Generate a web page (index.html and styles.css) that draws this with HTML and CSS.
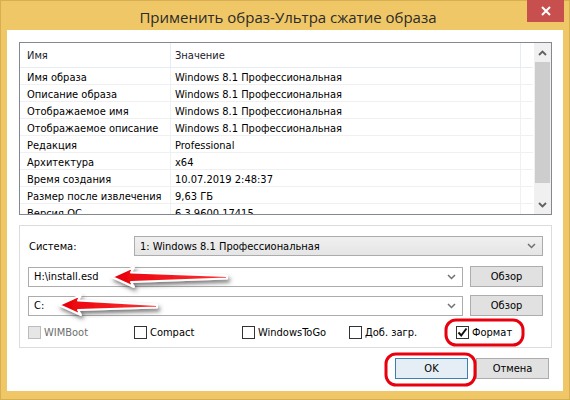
FILE: index.html
```html
<!DOCTYPE html>
<html>
<head>
<meta charset="utf-8">
<link rel="stylesheet" href="styles.css">
</head>
<body>
<div class="window">
  <div class="titlebar">
    <div class="title">Применить образ-Ультра сжатие образа</div>
    <div class="close">
      <svg width="10" height="10" viewBox="0 0 10 10"><path d="M1 1L9 9M9 1L1 9" stroke="#fff" stroke-width="2"/></svg>
    </div>
  </div>
  <div class="client">
    <div class="listview">
      <div class="lv-body">
        <div class="lv-row lv-head"><div class="c1">Имя</div><div class="c2">Значение</div><div class="c3"></div></div>
        <div class="lv-row"><div class="c1">Имя образа</div><div class="c2">Windows 8.1 Профессиональная</div><div class="c3"></div></div>
        <div class="lv-row"><div class="c1">Описание образа</div><div class="c2">Windows 8.1 Профессиональная</div><div class="c3"></div></div>
        <div class="lv-row"><div class="c1">Отображаемое имя</div><div class="c2">Windows 8.1 Профессиональная</div><div class="c3"></div></div>
        <div class="lv-row"><div class="c1">Отображаемое описание</div><div class="c2">Windows 8.1 Профессиональная</div><div class="c3"></div></div>
        <div class="lv-row"><div class="c1">Редакция</div><div class="c2">Professional</div><div class="c3"></div></div>
        <div class="lv-row"><div class="c1">Архитектура</div><div class="c2">x64</div><div class="c3"></div></div>
        <div class="lv-row"><div class="c1">Время создания</div><div class="c2">10.07.2019 2:48:37</div><div class="c3"></div></div>
        <div class="lv-row"><div class="c1">Размер после извлечения</div><div class="c2">9,63 ГБ</div><div class="c3"></div></div>
        <div class="lv-row"><div class="c1">Версия ОС</div><div class="c2">6.3.9600.17415</div><div class="c3"></div></div>
      </div>
      <div class="scrollbar">
        <div class="sb-btn"><svg width="9" height="6" viewBox="0 0 9 6"><path d="M1 5L4.5 1.5L8 5" fill="none" stroke="#606060" stroke-width="1.8"/></svg></div>
        <div class="sb-thumb"></div>
        <div class="sb-track"></div>
        <div class="sb-btn"><svg width="9" height="6" viewBox="0 0 9 6"><path d="M1 1L4.5 4.5L8 1" fill="none" stroke="#606060" stroke-width="1.8"/></svg></div>
      </div>
    </div>

    <div class="group">
      <div class="row sys-row">
        <div class="label">Система:</div>
        <div class="combo combo-ro">
          <span class="combo-text">1: Windows 8.1 Профессиональная</span>
          <svg class="chev" width="9" height="6" viewBox="0 0 9 6"><path d="M1 1L4.5 4.5L8 1" fill="none" stroke="#707070" stroke-width="1.5"/></svg>
        </div>
      </div>
      <div class="row path-row">
        <div class="combo combo-edit">
          <span class="combo-text">H:\install.esd</span>
          <svg class="chev" width="9" height="6" viewBox="0 0 9 6"><path d="M1 1L4.5 4.5L8 1" fill="none" stroke="#707070" stroke-width="1.5"/></svg>
        </div>
        <div class="btn">Обзор</div>
      </div>
      <div class="row path-row">
        <div class="combo combo-edit">
          <span class="combo-text">C:</span>
          <svg class="chev" width="9" height="6" viewBox="0 0 9 6"><path d="M1 1L4.5 4.5L8 1" fill="none" stroke="#707070" stroke-width="1.5"/></svg>
        </div>
        <div class="btn">Обзор</div>
      </div>
      <div class="checks">
        <label class="chk chk-1 disabled"><span class="box"></span><span>WIMBoot</span></label>
        <label class="chk chk-2"><span class="box"></span><span>Compact</span></label>
        <label class="chk chk-3"><span class="box"></span><span>WindowsToGo</span></label>
        <label class="chk chk-4"><span class="box"></span><span>Доб. загр.</span></label>
        <label class="chk chk-5"><span class="box"><svg width="11" height="11" viewBox="0 0 11 11"><path d="M1.5 5.5L4.2 8.5L9.5 1.5" fill="none" stroke="#111" stroke-width="2"/></svg></span><span>Формат</span></label>
      </div>
    </div>

    <div class="buttons">
      <div class="btn btn-default">OK</div>
      <div class="btn">Отмена</div>
    </div>
  </div>

  <svg class="annot" width="570" height="400" viewBox="0 0 570 400">
    <defs>
      <filter id="sh" x="-20%" y="-50%" width="140%" height="200%">
        <feDropShadow dx="2" dy="3" stdDeviation="2.2" flood-color="#404040" flood-opacity="0.7"/>
      </filter>
      <linearGradient id="rg" x1="0" y1="0" x2="1" y2="0">
        <stop offset="0" stop-color="#e8000a"/>
        <stop offset="1" stop-color="#ff3030"/>
      </linearGradient>
    </defs>
    <g filter="url(#sh)" stroke="#fff" stroke-width="2" stroke-linejoin="round" fill="url(#rg)">
      <path d="M112 277 L134 267 L131 272.5 L227 276 L227 278.5 L131 282 L134 287 Z"/>
      <path d="M59 305 L81 295 L78 300.5 L157 305 L157 307.5 L78 310 L81 315 Z"/>
    </g>
    <rect x="446" y="320" width="77" height="25" rx="10" fill="none" stroke="#e8000f" stroke-width="3"/>
    <rect x="386" y="354" width="89" height="31" rx="10" fill="none" stroke="#e8000f" stroke-width="3"/>
  </svg>
</div>
</body>
</html>
```

FILE: styles.css
```css
* { box-sizing: border-box; }
html, body { margin: 0; padding: 0; }
body {
  width: 570px;
  height: 400px;
  overflow: hidden;
  font-family: "DejaVu Sans Condensed", "Liberation Sans", sans-serif;
  font-size: 11px;
  color: #000;
}
.window {
  position: relative;
  width: 570px;
  height: 400px;
  background: #efc766;
  border: 1px solid #d8ae52;
  display: flex;
  flex-direction: column;
}
.titlebar {
  height: 29px;
  display: flex;
  position: relative;
}
.title {
  flex: 1;
  text-align: center;
  font-family: "Open Sans", "Noto Sans", sans-serif;
  font-size: 15px;
  color: #2b2b2b;
  line-height: 32px;
  padding-left: 6px;
}
.close {
  position: absolute;
  right: 5px;
  top: -1px;
  width: 37px;
  height: 22px;
  background: #c7504f;
  display: flex;
  align-items: center;
  justify-content: center;
}
.client {
  margin: 0 6px;
  height: 361px;
  background: #fff;
  padding: 12px 10px 0 12px;
  display: flex;
  flex-direction: column;
}
.listview {
  width: 533px;
  height: 173px;
  border: 1px solid #828790;
  display: flex;
  overflow: hidden;
}
.lv-body {
  width: 514px;
  overflow: hidden;
  display: flex;
  flex-direction: column;
}
.lv-row {
  display: flex;
  height: 17px;
  flex: none;
  border-bottom: 1px solid #f0f0f0;
}
.lv-row .c1, .lv-row .c2 {
  white-space: nowrap;
  padding-top: 3px;
  line-height: 13px;
  border-right: 1px solid #f0f0f0;
}
.lv-row .c1 { width: 151px; padding-left: 7px; }
.lv-row .c2 { width: 350px; padding-left: 4px; }
.lv-row .c3 { flex: 1; }
.lv-head { height: 25px; border-bottom: 1px solid #e5ecf4; color: #1a1a2a; }
.lv-head .c1, .lv-head .c2 { border-right-color: #e5ecf4; padding-top: 2px; line-height: 22px; }
.scrollbar {
  width: 17px;
  margin-left: 1px;
  background: #f0f0f0;
  display: flex;
  flex-direction: column;
}
.sb-btn { height: 19px; display: flex; align-items: center; justify-content: center; flex: none; }
.sb-thumb { height: 121px; margin: 0 1px; background: #cdcdcd; flex: none; }
.sb-track { flex: 1; }

.group {
  margin-top: 10px;
  width: 533px;
  height: 123px;
  border: 1px solid #dcdcdc;
  padding: 10px 8px 0 7px;
  display: flex;
  flex-direction: column;
}
.row { display: flex; align-items: center; }
.sys-row { height: 20px; }
.label { width: 107px; padding-left: 2px; }
.combo {
  height: 20px;
  border: 1px solid #acacac;
  display: flex;
  align-items: center;
  padding: 0 6px 0 5px;
}
.combo-text { flex: 1; white-space: nowrap; }
.combo-ro { width: 409px; background: linear-gradient(#f0f0f0, #e5e5e5); }
.combo-edit { width: 436px; background: #fff; }
.path-row { margin-top: 10px; height: 21px; }
.path-row + .path-row { margin-top: 8px; }
.path-row .combo { margin-left: 1px; }
.btn {
  width: 73px;
  height: 21px;
  border: 1px solid #adadad;
  background: #e1e1e1;
  display: flex;
  align-items: center;
  justify-content: center;
  margin-left: 7px;
}
.checks {
  margin-top: 9px;
  height: 14px;
  display: flex;
  align-items: center;
}
.chk { display: flex; align-items: center; white-space: nowrap; }
.box {
  width: 13px;
  height: 13px;
  border: 1px solid #333;
  background: #fff;
  margin-right: 3px;
  display: flex;
  align-items: center;
  justify-content: center;
}
.chk.disabled { color: #6d6d6d; }
.chk.disabled .box { border-color: #bcbcbc; background: #e6e6e6; }
.chk-1 { margin-left: 1px; width: 106px; }
.chk-2 { width: 108px; }
.chk-3 { width: 107px; }
.chk-4 { width: 107px; }

.buttons {
  margin-top: 10px;
  display: flex;
  justify-content: flex-end;
  padding-right: 4px;
}
.buttons .btn { margin-left: 8px; }
.btn-default { border-color: #3c7fb1; background: #e5eef5; }

.annot { position: absolute; left: -1px; top: -1px; pointer-events: none; }
```
